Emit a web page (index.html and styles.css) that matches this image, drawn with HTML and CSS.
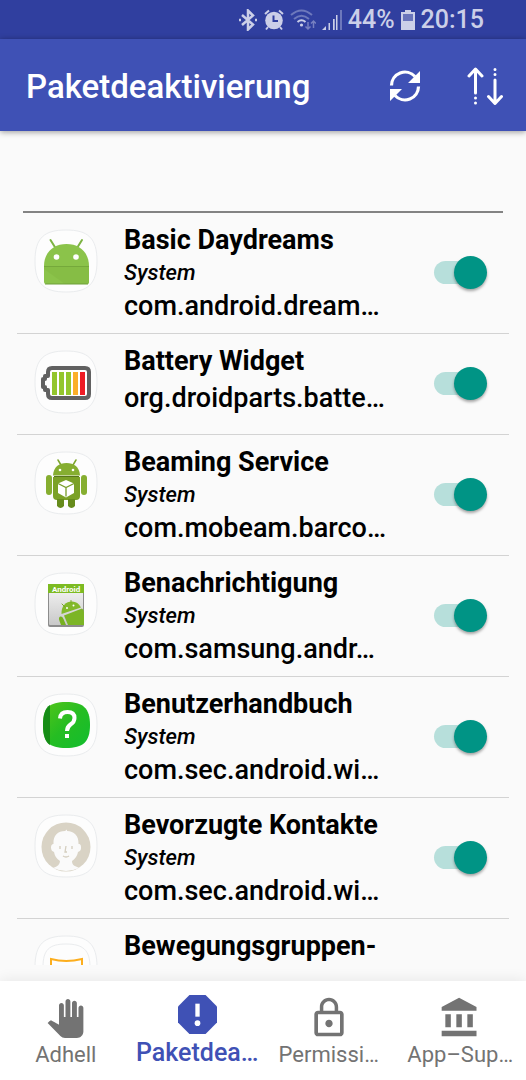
FILE: index.html
```html
<!DOCTYPE html>
<html lang="de">
<head>
    <meta charset="UTF-8">
    <meta name="viewport" content="width=device-width, initial-scale=1.0">
    <title>Paketdeaktivierung</title>
    <link rel="stylesheet" href="styles.css">
</head>
<body>
    <div class="status-bar">
        <svg width="20" height="22" viewBox="0 0 20 22" fill="none" stroke="currentColor" stroke-width="2.500">
            <path d="M4 6l11 9.500l-5 5V1.500l5 5L4 16"/>
            <path d="M1 11h2M17 11h2"/>
        </svg>
        <svg width="20" height="22" viewBox="0 0 20 22">
            <circle cx="10" cy="11.500" r="8.800" fill="currentColor"/>
            <path d="M1 5l4-3.500M19 5l-4-3.500M4 18l-2 2.500M16 18l2 2.500" stroke="currentColor" stroke-width="2"/>
            <path d="M9.500 6.500v5.500h4.500" fill="none" stroke="#303f9f" stroke-width="2"/>
        </svg>
        <svg width="26" height="22" viewBox="0 0 26 22" fill="none" stroke="currentColor" stroke-width="2">
            <path d="M1 6q10.500-9 21 0M4 10q7.500-6.500 15 0" opacity=".4"/>
            <path d="M7.500 13q4-3.500 8 0"/>
            <circle cx="11.500" cy="16" r="1.600" fill="currentColor" stroke="none"/>
            <path d="M18 13v7M15.500 17.500l2.500 2.500 2.500-2.500M23.500 19v-7M21 14.500l2.500-2.500 2.500 2.500" stroke-width="1.500" opacity=".45"/>
        </svg>
        <svg width="20" height="22" viewBox="0 0 20 22" fill="currentColor">
            <path d="M0 21l4-4v4zM6.500 14h1.500v7H6.500zM11 10h1.700v11H11zM14 6h1.500v15H14z"/>
            <path d="M18 1h2v20h-2z" opacity=".4"/>
        </svg>
        <span>44%</span>
        <svg width="14" height="22" viewBox="0 0 14 22" fill="currentColor">
            <path d="M4 1h6v2h4v18H0V3h4z"/>
            <path d="M2 5h10v7H2z" fill="#6974bb"/>
        </svg>
        <span>20:15</span>
    </div>

    <header class="toolbar">
        <h1>Paketdeaktivierung</h1>
        <button class="tool-button" aria-label="Aktualisieren">
            <svg width="32" height="32" viewBox="0 0 32 32" fill="none" stroke="#fff" stroke-width="3.200">
                <path d="M2.500 15.500A13.500 13.500 0 0 1 26 6.500"/>
                <path d="M29.500 16.500A13.500 13.500 0 0 1 6 25.500"/>
                <path d="M31 1v12H19zM1 31V19h12z" fill="#fff" stroke="none"/>
            </svg>
        </button>
        <button class="tool-button" aria-label="Sortieren">
            <svg width="36" height="38" viewBox="0 0 36 38" fill="none" stroke="#fff" stroke-width="3" stroke-linecap="round" stroke-linejoin="round">
                <path d="M8.500 26V3M2 9l6.500-7L15 9"/>
                <path d="M28 13v22M21.500 29.500l6.500 7 6.500-7"/>
                <path d="M8.500 31v0M8.500 36v0M28 2.500v0M28 7.500v0"/>
            </svg>
        </button>
    </header>

    <div class="search">
        <input type="text" aria-label="Suche">
    </div>

    <main class="app-list">
        <div class="app-row">
            <svg class="app-icon" viewBox="0 0 64 64">
                <path class="tile" d="M32 1C54 1 63 9 63 32S54 63 32 63 1 55 1 32 10 1 32 1z"/>
                <path d="M16.500 11l5 8M48 11l-5 8" stroke="#7cb342" stroke-width="2" stroke-linecap="round"/>
                <path d="M10 37C10 24 19 15 32.500 15S55 24 55 37v16q0 2-2 2H12q-2 0-2-2z" fill="#8bc34a"/>
                <path d="M10 37h45v16q0 2-2 2H31L10 40z" fill="#86bd45"/>
                <path d="M10 37.500h45" stroke="#75a93b"/>
                <path d="M11 55h43" stroke="#6f9f3a"/>
                <circle cx="22.500" cy="28" r="2.800" fill="#fff"/>
                <circle cx="42" cy="28" r="2.800" fill="#fff"/>
            </svg>
            <div class="app-info">
                <label class="app-name" for="app-1">Basic Daydreams</label>
                <p class="app-type">System</p>
                <p class="app-package">com.android.dream…</p>
            </div>
            <input class="switch" type="checkbox" role="switch" id="app-1" checked>
        </div>

        <div class="app-row">
            <svg class="app-icon" viewBox="0 0 64 64">
                <path class="tile" d="M32 1C54 1 63 9 63 32S54 63 32 63 1 55 1 32 10 1 32 1z"/>
                <path d="M18 18q-4 0-4 4v4h-3v3H9v8h2v3h3v4q0 4 4 4h33q4 0 4-4V22q0-4-4-4z" fill="#fff" stroke="#616161" stroke-width="4" stroke-linejoin="round"/>
                <path d="M18 22h5v23h-5zM25 22h5v23h-5zM32 22h5v23h-5z" fill="#93c62d"/>
                <path d="M39 22h5v23h-5z" fill="#fbaf2a"/>
                <path d="M46 22h5v23h-5z" fill="#ee1c25"/>
            </svg>
            <div class="app-info">
                <label class="app-name" for="app-2">Battery Widget</label>
                <p class="app-package">org.droidparts.batte…</p>
            </div>
            <input class="switch" type="checkbox" role="switch" id="app-2" checked>
        </div>

        <div class="app-row">
            <svg class="app-icon" viewBox="0 0 64 64">
                <path class="tile" d="M32 1C54 1 63 9 63 32S54 63 32 63 1 55 1 32 10 1 32 1z"/>
                <path d="M24 9l3 5M42 9l-3 5" stroke="#7da52c" stroke-width="1.500" stroke-linecap="round"/>
                <g fill="#86ae30">
                    <path d="M19 24.500C19.500 16 25 12 32.500 12S45.500 16 46 24.500z"/>
                    <path d="M19 26h27v19q0 4-4 4H23q-4 0-4-4z" fill="#7ba126"/>
                    <rect x="12" y="24" width="6" height="20" rx="3"/>
                    <rect x="47" y="24" width="6" height="20" rx="3"/>
                    <path d="M23 48h7v7q-3.500 4-7 0zM34 48h7v7q-3.500 4-7 0z" fill="#668b1c"/>
                </g>
                <path d="M20 25.500h25" stroke="#58751c"/>
                <circle cx="26" cy="19" r="1.300" fill="#fff"/>
                <circle cx="39" cy="19" r="1.300" fill="#fff"/>
                <path d="M32 29l8 3.500v9.500l-8 4.500-8-4.500v-9.500z" fill="#fff"/>
                <path d="M24 32.500l8 4 8-4M32 36.500v9" fill="none" stroke="#789d29" stroke-width="1.300"/>
            </svg>
            <div class="app-info">
                <label class="app-name" for="app-3">Beaming Service</label>
                <p class="app-type">System</p>
                <p class="app-package">com.mobeam.barco…</p>
            </div>
            <input class="switch" type="checkbox" role="switch" id="app-3" checked>
        </div>

        <div class="app-row">
            <svg class="app-icon" viewBox="0 0 64 64">
                <defs>
                    <linearGradient id="paper" x1="0" y1="0" x2="0" y2="1">
                        <stop offset="0" stop-color="#f7f7f7"/>
                        <stop offset="1" stop-color="#c9c9c9"/>
                    </linearGradient>
                </defs>
                <path class="tile" d="M32 1C54 1 63 9 63 32S54 63 32 63 1 55 1 32 10 1 32 1z"/>
                <rect x="14" y="13" width="36" height="42" rx="2" fill="#8c8c8c"/>
                <rect x="15" y="12" width="34" height="41" rx="1" fill="url(#paper)"/>
                <path d="M14 12h36v9H14z" fill="#7dbb22"/>
                <text class="icon-caption" x="18" y="20">Android</text>
                <path d="M27.500 42C27 34 32 29.500 38 29.500q6 0 9 6z" fill="#83b92b"/>
                <path d="M30 43.500l18-7q2 1 2 4V53H34z" fill="#7cb526"/>
                <path d="M25.500 49q-1.500-4 1-4.500 2-.5 3 2.500l2.500 6h-5z" fill="#77b020"/>
                <path d="M28 32l3 3M37 28.500V31" stroke="#77a925" stroke-linecap="round"/>
                <circle cx="33" cy="36" r="1" fill="#fff"/>
                <circle cx="39.500" cy="33.500" r="1" fill="#fff"/>
            </svg>
            <div class="app-info">
                <label class="app-name" for="app-4">Benachrichtigung</label>
                <p class="app-type">System</p>
                <p class="app-package">com.samsung.andr…</p>
            </div>
            <input class="switch" type="checkbox" role="switch" id="app-4" checked>
        </div>

        <div class="app-row">
            <svg class="app-icon" viewBox="0 0 64 64">
                <defs>
                    <linearGradient id="book" x1="0" y1="0" x2="1" y2="1">
                        <stop offset="0" stop-color="#55c51a"/>
                        <stop offset=".5" stop-color="#25bd22"/>
                        <stop offset="1" stop-color="#12bd2f"/>
                    </linearGradient>
                </defs>
                <path class="tile" d="M32 1C54 1 63 9 63 32S54 63 32 63 1 55 1 32 10 1 32 1z"/>
                <path d="M32 9C49 9 56 15 56 32S49 55 32 55 9 49 9 32 15 9 32 9z" fill="url(#book)"/>
                <path d="M16 12v40C11 49 9 42 9 32s2-17 7-20z" fill="#168d16"/>
                <path d="M26 25.500q.5-6.500 7.500-6.500 7 0 7 6 0 4-4 6.500-3.500 2.500-3.500 6.500" fill="none" stroke="#fff" stroke-width="4"/>
                <path d="M31 41h4v4h-4z" fill="#fff"/>
            </svg>
            <div class="app-info">
                <label class="app-name" for="app-5">Benutzerhandbuch</label>
                <p class="app-type">System</p>
                <p class="app-package">com.sec.android.wi…</p>
            </div>
            <input class="switch" type="checkbox" role="switch" id="app-5" checked>
        </div>

        <div class="app-row">
            <svg class="app-icon" viewBox="0 0 64 64">
                <path class="tile" d="M32 1C54 1 63 9 63 32S54 63 32 63 1 55 1 32 10 1 32 1z"/>
                <circle cx="32" cy="33" r="24.500" fill="#d9d3c5"/>
                <path d="M19 54q7-2 7-7-5-3-6-9-3-1-3-4.500t2.500-3.500C19 21 24 17 31 17l2-1.500v1.500c7 0 12 5 11.500 13 2.500 0 2.500 2 2.500 3.500s0 3.500-3 4.500c-1 6-6 9-6 9 0 5 4 5 7 7q-13 6-26 0z" fill="#fafafa"/>
                <path d="M26 32v3M38 32v3M32 32l-1 6h2M29 42q3 2 6 0" fill="none" stroke="#d4cebf" stroke-width="1.300"/>
            </svg>
            <div class="app-info">
                <label class="app-name" for="app-6">Bevorzugte Kontakte</label>
                <p class="app-type">System</p>
                <p class="app-package">com.sec.android.wi…</p>
            </div>
            <input class="switch" type="checkbox" role="switch" id="app-6" checked>
        </div>

        <div class="app-row">
            <svg class="app-icon" viewBox="0 0 64 64">
                <path class="tile" d="M32 1C54 1 63 9 63 32S54 63 32 63 1 55 1 32 10 1 32 1z"/>
                <path class="tile" d="M32 9C49 9 56 15 56 32S49 55 32 55 9 49 9 32 15 9 32 9z"/>
                <path d="M17 32v-8q15 4 31 0v8" fill="none" stroke="#fcae1e" stroke-width="2"/>
            </svg>
            <div class="app-info">
                <p class="app-name">Bewegungsgruppen-</p>
            </div>
        </div>
    </main>

    <nav class="bottom-nav">
        <a class="nav-item" href="#adhell">
            <span class="nav-icon">
                <svg width="39" height="39" viewBox="0 0 24 24" fill="currentColor"><path d="M23 5.500V20c0 2.200-1.800 4-4 4h-7.300c-1.080 0-2.100-.43-2.850-1.190L1 14.830s1.260-1.230 1.300-1.250c.22-.19.49-.29.79-.29.22 0 .42.060.6.160.04.010 4.310 2.460 4.310 2.460V4c0-.83.67-1.500 1.500-1.500S11 3.170 11 4v7h1V1.500c0-.83.67-1.500 1.500-1.500S15 .67 15 1.500V11h1V2.500c0-.83.67-1.500 1.500-1.500s1.500.67 1.500 1.500V11h1V5.500c0-.83.67-1.500 1.500-1.500s1.500.67 1.500 1.500z"/></svg>
            </span>
            <span class="nav-label">Adhell</span>
        </a>
        <a class="nav-item active" href="#packages" aria-current="page">
            <span class="nav-icon">
                <svg width="39" height="39" viewBox="3 3 18 18" fill="currentColor">
                    <path d="M15.730 3H8.270L3 8.270v7.460L8.270 21h7.460L21 15.730V8.270z"/>
                    <path d="M11 7h2v6h-2z" fill="#fff"/>
                    <circle cx="12" cy="16" r="1.300" fill="#fff"/>
                </svg>
            </span>
            <span class="nav-label">Paketdea…</span>
        </a>
        <a class="nav-item" href="#permissions">
            <span class="nav-icon">
                <svg width="44" height="44" viewBox="0 0 24 24" fill="currentColor"><path d="M12 17c1.100 0 2-.9 2-2s-.9-2-2-2-2 .9-2 2 .9 2 2 2zm6-9h-1V6c0-2.760-2.240-5-5-5S7 3.240 7 6v2H6c-1.100 0-2 .9-2 2v10c0 1.100.9 2 2 2h12c1.100 0 2-.9 2-2V10c0-1.100-.9-2-2-2zM8.900 6c0-1.710 1.390-3.100 3.100-3.100s3.100 1.390 3.100 3.100v2H8.900V6zM18 20H6V10h12v10z"/></svg>
            </span>
            <span class="nav-label">Permissi…</span>
        </a>
        <a class="nav-item" href="#support">
            <span class="nav-icon">
                <svg width="44" height="44" viewBox="0 0 24 24" fill="currentColor"><path d="M4 10v7h3v-7H4zm6 0v7h3v-7h-3zM2 22h19v-3H2v3zm14-12v7h3v-7h-3zm-4.500-9L2 6v2h19V6l-9.500-5z"/></svg>
            </span>
            <span class="nav-label">App–Sup…</span>
        </a>
    </nav>
</body>
</html>
```

FILE: styles.css
```css
* {
    margin: 0;
    padding: 0;
    box-sizing: border-box;
}
body {
    font-family: Roboto, sans-serif;
    font-weight: 500;
    display: flex;
    flex-direction: column;
    height: 100vh;
    overflow: hidden;
    background-color: #fafafa;
    color: #000;
}
svg {
    display: block;
    flex-shrink: 0;
}
.status-bar {
    display: flex;
    align-items: center;
    justify-content: flex-end;
    gap: 6px;
    height: 39px;
    padding-right: 42px;
    background-color: #303f9f;
    color: #cbcfe8;
    font-size: 25px;
}
.toolbar {
    display: flex;
    align-items: center;
    gap: 46px;
    height: 92px;
    padding: 2px 23px 0 26px;
    background-color: #3f51b5;
    color: #fff;
    box-shadow: 0 1px 6px rgba(0,0,0,0.4);
}
h1 {
    flex: 1;
    font-size: 33px;
    font-weight: 500;
}
.tool-button {
    background: none;
    border: none;
    cursor: pointer;
}
.search {
    padding: 0 23px;
}
.search input {
    display: block;
    width: 100%;
    height: 82px;
    padding-top: 30px;
    border: none;
    border-bottom: 2px solid #838383;
    background: none;
    font: inherit;
    font-size: 27px;
    outline: none;
}
.app-list {
    flex: 1;
    min-height: 0;
    overflow: hidden;
    margin: 0 17px 16px;
}
.app-row {
    display: flex;
    align-items: center;
    padding: 9px 22px 8px 17px;
    border-bottom: 1px solid #d3d3d3;
}
.app-icon {
    align-self: flex-start;
    width: 64px;
    height: 64px;
    margin-top: 7px;
    margin-right: 26px;
}
.tile {
    fill: #fdfdfd;
    stroke: #eaecee;
}
.icon-caption {
    font: 700 8px Roboto, sans-serif;
    fill: #fff;
}
.app-info {
    flex: 1;
    align-self: flex-start;
    min-width: 0;
    white-space: nowrap;
}
.app-name {
    display: block;
    font-size: 27px;
    font-weight: 700;
    line-height: 36px;
}
.app-type {
    font-size: 22px;
    font-style: italic;
    line-height: 29px;
}
.app-package {
    font-size: 27px;
    line-height: 38px;
}
.app-name + .app-package {
    padding-bottom: 9px;
}
.switch {
    appearance: none;
    position: relative;
    width: 53px;
    height: 33px;
    margin-bottom: 2px;
    cursor: pointer;
}
.switch::before {
    content: "";
    position: absolute;
    top: 5px;
    left: 0;
    width: 46px;
    height: 23px;
    border-radius: 12px;
    background-color: #b7dfdb;
}
.switch::after {
    content: "";
    position: absolute;
    right: 0;
    width: 33px;
    height: 33px;
    border-radius: 50%;
    background-color: #009485;
    box-shadow: 0 2px 3px rgba(0,0,0,0.35);
}
.bottom-nav {
    display: flex;
    height: 99px;
    background-color: #fff;
    box-shadow: 0 0 14px rgba(0,0,0,0.09);
}
.nav-item {
    flex: 1;
    display: flex;
    flex-direction: column;
    align-items: center;
    padding-top: 15px;
    color: #737373;
    font-size: 22px;
    font-weight: 400;
    line-height: 30px;
    text-decoration: none;
    white-space: nowrap;
}
.nav-icon {
    display: flex;
    align-items: center;
    height: 44px;
}
.active {
    padding-top: 11px;
    color: #3f51b5;
    font-size: 25px;
    font-weight: 500;
    line-height: 34px;
}
```
